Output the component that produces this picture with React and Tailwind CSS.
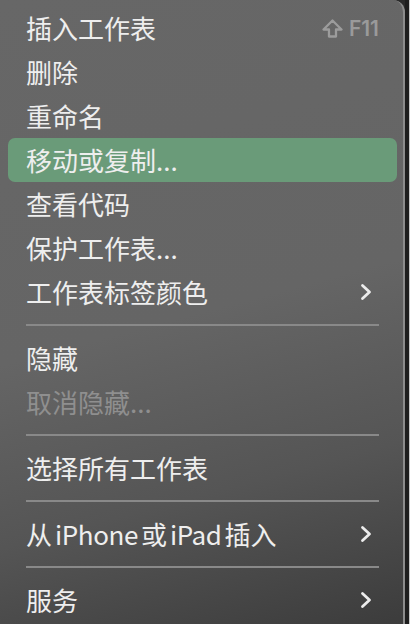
import React from "react";

const font = { fontFamily: '"Noto Sans CJK SC", "Noto Sans", sans-serif' };

function Chevron() {
  return (
    <svg width="12" height="18" viewBox="0 0 12 18" className="shrink-0 ml-[2px]">
      <path d="M2.5 2.5 L9.5 9 L2.5 15.5" fill="none" stroke="#ececec" strokeWidth="2.8" strokeLinecap="round" strokeLinejoin="round" />
    </svg>
  );
}

function ShiftIcon() {
  return (
    <svg width="21" height="19" viewBox="0 0 21 19" className="shrink-0 block">
      <path d="M10.5 1.5 L19.5 10.5 L14 10.5 L14 17.5 L7 17.5 L7 10.5 L1.5 10.5 Z" fill="none" stroke="#9c9c9c" strokeWidth="2.3" strokeLinejoin="round" />
    </svg>
  );
}

function Row({ label, disabled, active, chevron, shortcut }) {
  return (
    <div
      className={`h-[44px] flex items-center pl-[18px] pr-[25px] rounded-[7px] ${active ? "bg-[#6a9b79]" : ""}`}
    >
      <span
        className={`flex-1 text-[26px] leading-none whitespace-nowrap ${disabled ? "text-[#8f8f8f]" : "text-[#eeeeee]"}`}
        style={font}
      >
        {label}
      </span>
      {chevron && <Chevron />}
      {shortcut && (
        <div className="flex items-center gap-[6px] mr-[-7px]">
          <ShiftIcon />
          <span className="text-[21px] font-semibold text-[#9a9a9a] leading-none" style={{ fontFamily: 'Inter, "Liberation Sans", sans-serif' }}>
            F11
          </span>
        </div>
      )}
    </div>
  );
}

function Sep() {
  return (
    <div className="h-[22px] flex items-center px-[18px]">
      <div className="h-[2px] w-full bg-[#898989]" />
    </div>
  );
}

export default function App() {
  return (
    <div className="w-[410px] h-[624px] flex bg-[#2a2a2a] overflow-hidden">
      <div className="w-[405px] h-[624px] rounded-tr-[12px] border-r-2 border-[#8c8c8c] bg-[linear-gradient(165deg,#676767_0%,#656565_50%,#555555_75%,#3c3c3c_100%)] pt-[6px] pl-[8px] pr-[6px] flex flex-col">
        <Row label="插入工作表" shortcut />
        <Row label="删除" />
        <Row label="重命名" />
        <Row label="移动或复制..." active />
        <Row label="查看代码" />
        <Row label="保护工作表..." />
        <Row label="工作表标签颜色" chevron />
        <Sep />
        <Row label="隐藏" />
        <Row label="取消隐藏..." disabled />
        <Sep />
        <Row label="选择所有工作表" />
        <Sep />
        <Row
          label={
            <>
              从<span className="ml-[3px] tracking-[-0.4px]">iPhone</span>
              <span className="ml-[3px]">或</span>
              <span className="ml-[3px] tracking-[-0.4px]">iPad</span>
              <span className="ml-[3px]">插入</span>
            </>
          }
          chevron
        />
        <Sep />
        <Row label="服务" chevron />
      </div>
      <div className="w-[5px] flex">
        <div className="w-[4px] bg-[#1e1e1e]" />
        <div className="w-[1px] bg-[#c8c8c8]" />
      </div>
    </div>
  );
}
